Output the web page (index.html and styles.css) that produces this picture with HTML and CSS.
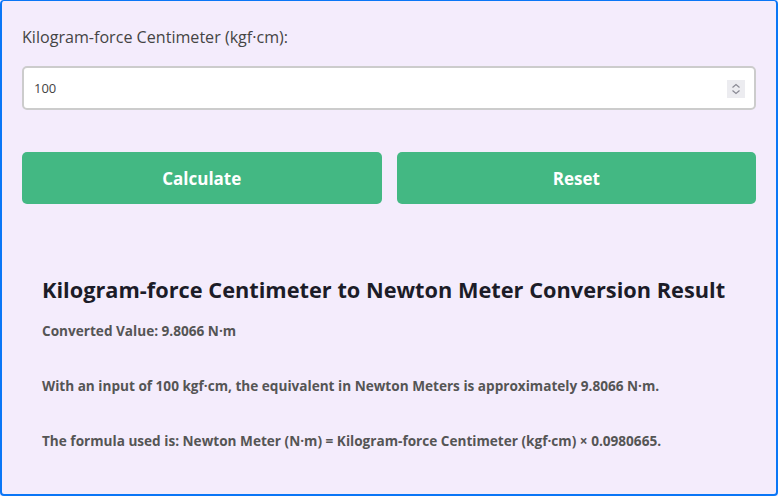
FILE: index.html
```html
<!DOCTYPE html>
<html>
<head>
<meta charset="utf-8">
<link rel="stylesheet" href="styles.css">
</head>
<body>
<div class="frame">
  <label class="label" for="val">Kilogram-force Centimeter (kgf·cm):</label>
  <div class="field">
    <input id="val" class="input" type="text" value="100">
    <span class="spin">
      <svg width="18" height="18" viewBox="0 0 18 18"><path d="M5.5 7.5 L9 4.5 L12.5 7.5" fill="none" stroke="#8a8a94" stroke-width="1.2"/><path d="M5.5 10.5 L9 13.5 L12.5 10.5" fill="none" stroke="#8a8a94" stroke-width="1.2"/></svg>
    </span>
  </div>
  <div class="actions">
    <button class="btn">Calculate</button>
    <button class="btn">Reset</button>
  </div>
  <div class="result">
    <h2 class="title">Kilogram-force Centimeter to Newton Meter Conversion Result</h2>
    <p class="line first">Converted Value: 9.8066 N·m</p>
    <p class="line">With an input of 100 kgf·cm, the equivalent in Newton Meters is approximately 9.8066 N·m.</p>
    <p class="line">The formula used is: Newton Meter (N·m) = Kilogram-force Centimeter (kgf·cm) × 0.0980665.</p>
  </div>
</div>
</body>
</html>
```
FILE: styles.css
```css
html, body {
  margin: 0;
  padding: 0;
  background: #f4ecfc;
}
body {
  font-family: "Open Sans", "Noto Sans", sans-serif;
}
.frame {
  box-sizing: border-box;
  width: 778px;
  height: 496px;
  border: 2px solid #0a76f6;
  border-top-width: 1px;
  border-radius: 4px;
  background: #f4ecfc;
  padding: 25px 20px 0 20px;
  overflow: hidden;
}
.label {
  display: block;
  font-size: 16.1px;
  line-height: 22px;
  color: #444;
  margin-bottom: 18px;
}
.field {
  position: relative;
}
.input {
  display: block;
  box-sizing: border-box;
  width: 100%;
  height: 44px;
  border: 2px solid #cccccc;
  border-radius: 5px;
  background: #fff;
  padding: 0 10px;
  font-family: "Open Sans", sans-serif;
  font-size: 13px;
  color: #444;
  outline: none;
}
.spin {
  position: absolute;
  right: 11px;
  top: 14px;
  width: 18px;
  height: 18px;
  background: #ececf0;
  display: flex;
}
.actions {
  display: flex;
  gap: 15px;
  margin-top: 42px;
}
.btn {
  flex: 1;
  height: 52px;
  border: none;
  border-radius: 5px;
  background: #43b883;
  color: #fff;
  font-family: "Open Sans", sans-serif;
  font-weight: 700;
  font-size: 17px;
}
.result {
  padding: 71px 20px 0 20px;
}
.title {
  margin: 0;
  font-size: 21.75px;
  line-height: 30px;
  font-weight: 700;
  color: #1c1c28;
}
.line {
  margin: 0;
  font-size: 13.6px;
  line-height: 20px;
  font-weight: 700;
  color: #555;
  margin-top: 35px;
}
.line.first {
  margin-top: 16px;
}
```
